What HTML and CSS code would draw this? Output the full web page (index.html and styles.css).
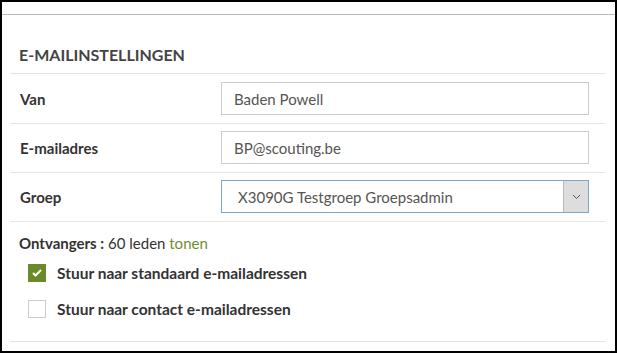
FILE: index.html
```html
<!DOCTYPE html>
<html lang="nl">
<head>
    <meta charset="UTF-8">
    <title>E-mailinstellingen</title>
    <link rel="stylesheet" href="styles.css">
</head>
<body>
    <div class="frame">
        <div class="topbar"></div>
        <div class="panel">
            <h2 class="title">E-MAILINSTELLINGEN</h2>
            <div class="row">
                <label class="label">Van</label>
                <input class="field" type="text" value="Baden Powell">
            </div>
            <div class="row">
                <label class="label">E-mailadres</label>
                <input class="field" type="text" value="BP@scouting.be">
            </div>
            <div class="row">
                <label class="label">Groep</label>
                <div class="select">
                    <span class="select-text">X3090G Testgroep Groepsadmin</span>
                    <span class="select-arrow">
                        <svg width="9" height="6" viewBox="0 0 9 6"><path d="M1 1l3.5 3.5L8 1" fill="none" stroke="#555" stroke-width="1"/></svg>
                    </span>
                </div>
            </div>
            <div class="recipients">
                <p class="count"><b>Ontvangers :</b> 60 leden <a href="#" class="show">tonen</a></p>
                <div class="check">
                    <span class="box checked">
                        <svg width="10" height="8" viewBox="0 0 10 8"><path d="M1 4l2.5 2.5L9 1" fill="none" stroke="#fff" stroke-width="2"/></svg>
                    </span>
                    <span>Stuur naar standaard e-mailadressen</span>
                </div>
                <div class="check">
                    <span class="box"></span>
                    <span>Stuur naar contact e-mailadressen</span>
                </div>
            </div>
        </div>
    </div>
</body>
</html>
```

FILE: styles.css
```css
* {
    box-sizing: border-box;
}
body {
    margin: 0;
    font-family: Lato, "Open Sans", sans-serif;
    color: #333;
    background: #fff;
}
.frame {
    height: 353px;
    border: 2px solid #000;
}
.topbar {
    height: 13px;
    border-bottom: 1px solid #bbb;
}
.panel {
    padding: 0 10px 0 8px;
}
.title {
    margin: 0;
    padding: 30px 0 0 9px;
    height: 59px;
    font-size: 16px;
    line-height: 19px;
    font-weight: 700;
    color: #444;
    border-bottom: 1px solid #e3e3e3;
}
.row {
    display: flex;
    align-items: center;
    padding: 7px 16px 8px 10px;
    border-bottom: 1px solid #e6e6e6;
}
.row:nth-child(2) {
    padding-top: 8px;
}
.label {
    width: 201px;
    font-size: 15px;
    font-weight: 700;
    color: #333;
}
.field {
    flex: 1;
    height: 33px;
    border: 1px solid #ccc;
    padding: 0 12px;
    font-family: inherit;
    font-size: 15px;
    color: #555;
}
.select {
    flex: 1;
    display: flex;
    height: 33px;
    border: 1px solid #7ea6cb;
}
.select-text {
    flex: 1;
    display: flex;
    align-items: center;
    padding-left: 16px;
    font-size: 15px;
    color: #555;
}
.select-arrow {
    width: 25px;
    display: flex;
    align-items: center;
    justify-content: center;
    background: #ddd;
    border-left: 1px solid #bbb;
}
.recipients {
    height: 120px;
    padding: 11px 0 0 9px;
    border-bottom: 1px solid #e3e3e3;
}
.count {
    margin: 0 0 2px;
    font-size: 15px;
    line-height: 20px;
}
.show {
    color: #6f8f2f;
    text-decoration: none;
}
.check {
    display: flex;
    align-items: center;
    gap: 11px;
    padding-left: 9px;
    height: 36px;
    font-size: 15.5px;
    font-weight: 700;
    color: #333;
}
.box {
    width: 18px;
    height: 18px;
    border: 1px solid #ccc;
    display: flex;
    align-items: center;
    justify-content: center;
}
.box.checked {
    background: #6b8a2a;
    border-color: #6b8a2a;
}
```
